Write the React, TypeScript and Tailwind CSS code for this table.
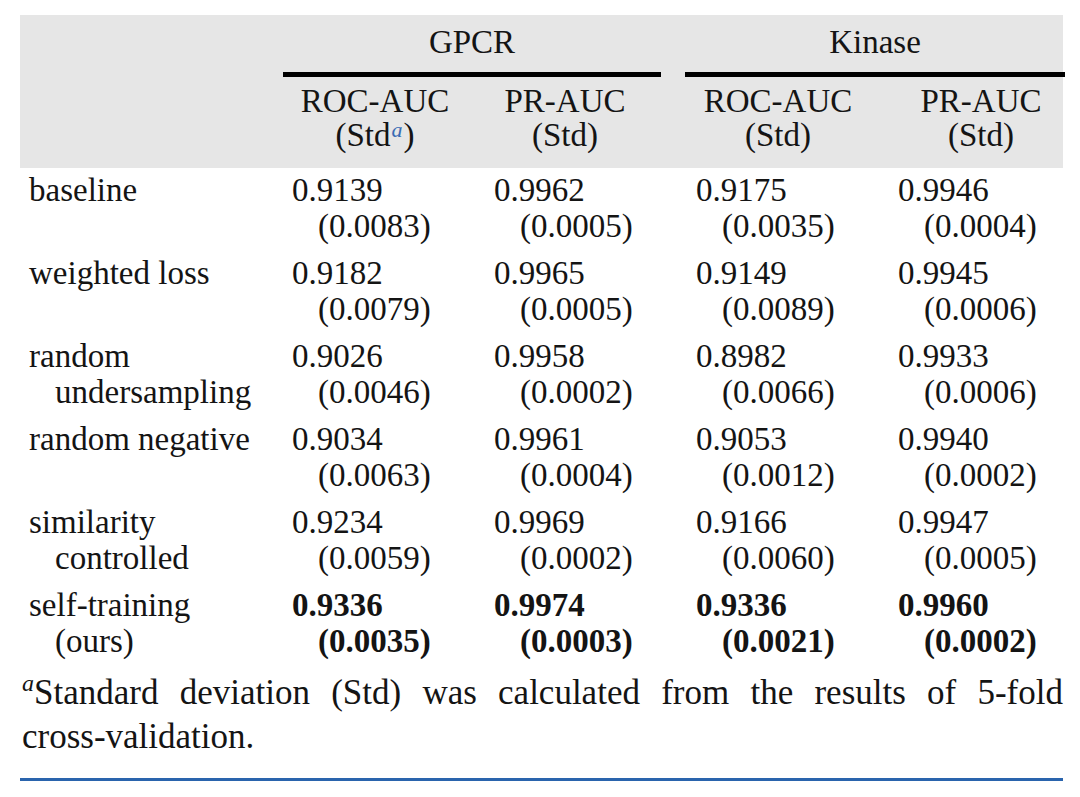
import * as React from 'react';

type Cell = { v: string; s: string };
type Row = { label: [string, string?]; cells: Cell[]; bold?: boolean };

const rows: Row[] = [
  { label: ['baseline'], cells: [{ v: '0.9139', s: '0.0083' }, { v: '0.9962', s: '0.0005' }, { v: '0.9175', s: '0.0035' }, { v: '0.9946', s: '0.0004' }] },
  { label: ['weighted loss'], cells: [{ v: '0.9182', s: '0.0079' }, { v: '0.9965', s: '0.0005' }, { v: '0.9149', s: '0.0089' }, { v: '0.9945', s: '0.0006' }] },
  { label: ['random', 'undersampling'], cells: [{ v: '0.9026', s: '0.0046' }, { v: '0.9958', s: '0.0002' }, { v: '0.8982', s: '0.0066' }, { v: '0.9933', s: '0.0006' }] },
  { label: ['random negative'], cells: [{ v: '0.9034', s: '0.0063' }, { v: '0.9961', s: '0.0004' }, { v: '0.9053', s: '0.0012' }, { v: '0.9940', s: '0.0002' }] },
  { label: ['similarity', 'controlled'], cells: [{ v: '0.9234', s: '0.0059' }, { v: '0.9969', s: '0.0002' }, { v: '0.9166', s: '0.0060' }, { v: '0.9947', s: '0.0005' }] },
  { label: ['self-training', '(ours)'], bold: true, cells: [{ v: '0.9336', s: '0.0035' }, { v: '0.9974', s: '0.0003' }, { v: '0.9336', s: '0.0021' }, { v: '0.9960', s: '0.0002' }] },
];

const cols = 'grid grid-cols-[263px_202px_202px_202px_176px]';

function SubHead({ label, sup, className }: { label: string; sup?: boolean; className?: string }) {
  return (
    <div className={`text-center leading-[34px] ${className ?? ''}`}>
      <div>{label}</div>
      <div>
        (Std
        {sup && <sup className="italic text-[22px] text-[#3a6cb4] ml-[1px] mr-[1px] top-[-9px]">a</sup>}
        )
      </div>
    </div>
  );
}

export default function App() {
  return (
    <div className="w-[1080px] h-[797px] bg-white pt-[15px] pl-[20px] font-['Liberation_Serif',serif] text-[33px] text-[#141414]">
      <div className="w-[1043px]">
        <div className="bg-[#e6e6e6] h-[153px]">
          <div className={cols}>
            <div />
            <div className="col-span-2 pr-[26px]">
              <div className="pt-[8px] leading-[38px] text-center mb-[11px]">GPCR</div>
              <div className="h-[5px] bg-black" />
            </div>
            <div className="col-span-2 ml-[-2px]">
              <div className="pt-[8px] leading-[38px] text-center mb-[11px]">Kinase</div>
              <div className="h-[5px] bg-black" />
            </div>
          </div>
          <div className={`${cols} pt-[7px]`}>
            <div />
            <SubHead label="ROC-AUC" sup className="pr-[18px]" />
            <SubHead label="PR-AUC" className="pr-[42px]" />
            <SubHead label="ROC-AUC" className="pr-[20px]" />
            <SubHead label="PR-AUC" className="pl-[8px]" />
          </div>
        </div>

        <div className="pt-[4px] flex flex-col gap-[11px]">
          {rows.map(r => (
            <div key={r.label[0]} className={`${cols} leading-[36px]`}>
              <div className="pl-[9px]">
                <div>{r.label[0]}</div>
                {r.label[1] && <div className="pl-[26px]">{r.label[1]}</div>}
              </div>
              {r.cells.map((c, i) => (
                <div key={i} className={`pl-[9px] ${r.bold ? 'font-bold' : ''}`}>
                  <div>{c.v}</div>
                  <div className="pl-[26px]">({c.s})</div>
                </div>
              ))}
            </div>
          ))}
        </div>

        <div className="mt-[12px] text-[35px] leading-[44px] pl-[2px]">
          <div className="whitespace-nowrap [text-align-last:justify] text-justify">
            <sup className="italic text-[24px] top-[-13px]">a</sup>Standard deviation (Std) was calculated from the results of 5-fold
          </div>
          <div>cross-validation.</div>
        </div>

        <div className="mt-[19px] h-[3px] bg-[#2a64ad]" />
      </div>
    </div>
  );
}
